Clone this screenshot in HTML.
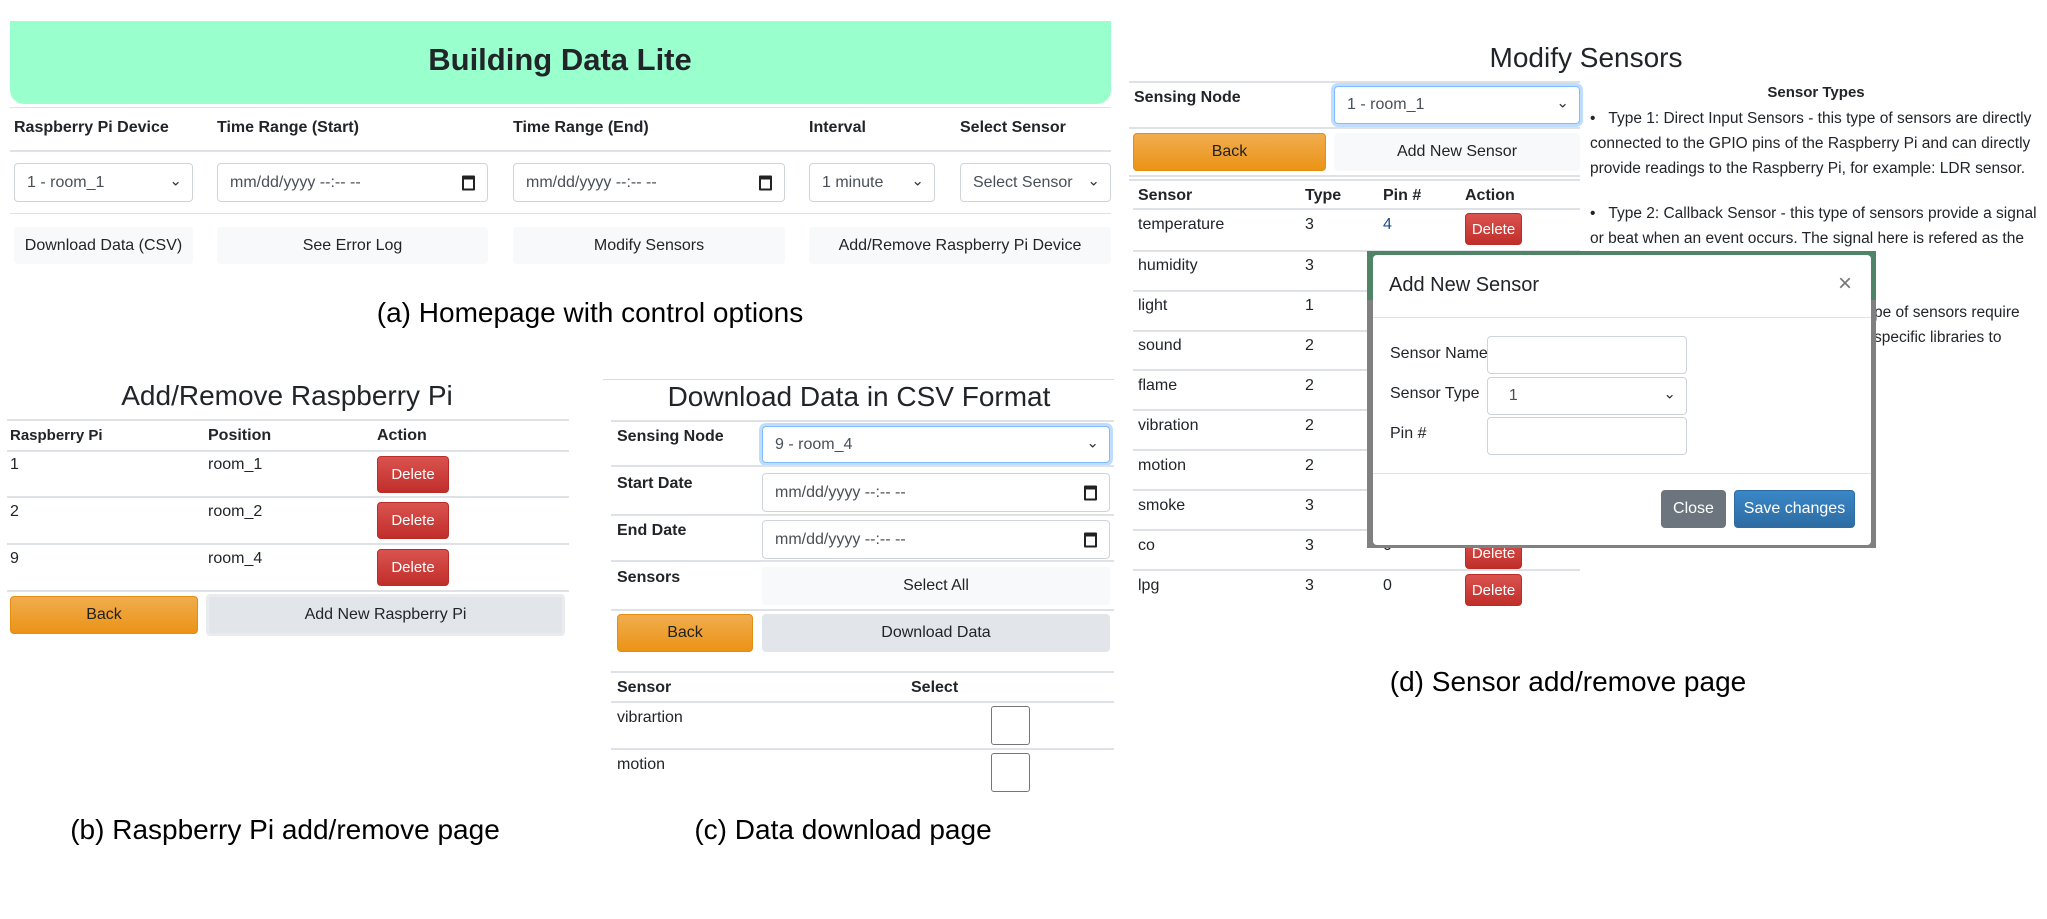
<!DOCTYPE html>
<html><head><meta charset="utf-8"><style>
*{box-sizing:border-box;margin:0;padding:0}
body{width:2047px;height:919px;background:#fff;position:relative;overflow:hidden;font-family:"Liberation Sans",sans-serif;color:#212529;font-size:16px}
.a{position:absolute;white-space:nowrap}
.b{font-weight:bold}
.ln{position:absolute;height:2px;background:#dee2e6}
.inp{position:absolute;border:1px solid #ced4da;border-radius:4px;background:#fff;font-size:16px;color:#495057;padding-left:12px;display:flex;align-items:center}
.sel::after{content:"⌄";position:absolute;right:10px;top:50%;transform:translateY(-65%);font-size:15px;color:#333}
.cal{position:absolute;right:12px;top:50%;transform:translateY(-50%);width:13px;height:15px;border:2px solid #222;border-top-width:4px;border-radius:1px}
.btn{position:absolute;display:flex;align-items:center;justify-content:center;border-radius:4px;font-size:16px;overflow:hidden;white-space:nowrap}
.lt{background:#f8f9fa;color:#212529}
.gr{background:#e2e6ea;color:#212529}
.or{background:linear-gradient(#f0ad4e,#eb9316);color:#222;border:1px solid #e38d13}
.dl{background:linear-gradient(#d9534f,#c12e2a);color:#fff;border:1px solid #b92c28;font-size:15px}
.dd{width:57px;min-width:57px;max-width:57px;flex:none}
.cap{position:absolute;font-size:28px;color:#000;white-space:nowrap;transform:translateX(-50%)}
.h{position:absolute;font-size:28px;white-space:nowrap;transform:translateX(-50%)}
.focus{border:1px solid #80bdff;box-shadow:0 0 0 3px rgba(0,123,255,.25)}
</style></head><body>

<!-- (a) -->
<div class="a" style="left:10px;top:21px;width:1101px;height:83px;background:#99ffcc;border-radius:0 0 14px 14px"></div>
<div class="h b" style="left:560px;top:42px;font-size:31px">Building Data Lite</div>
<div class="ln" style="left:10px;top:107px;width:1101px;height:1px"></div>
<div class="a b" style="left:14px;top:119px;font-size:16px">Raspberry Pi Device</div>
<div class="a b" style="left:217px;top:119px">Time Range (Start)</div>
<div class="a b" style="left:513px;top:119px">Time Range (End)</div>
<div class="a b" style="left:809px;top:119px">Interval</div>
<div class="a b" style="left:960px;top:119px">Select Sensor</div>
<div class="ln" style="left:10px;top:150px;width:1101px"></div>
<div class="inp sel" style="left:14px;top:163px;width:179px;height:39px">1 - room_1</div>
<div class="inp" style="left:217px;top:163px;width:271px;height:39px">mm/dd/yyyy --:-- --<span class="cal"></span></div>
<div class="inp" style="left:513px;top:163px;width:272px;height:39px">mm/dd/yyyy --:-- --<span class="cal"></span></div>
<div class="inp sel" style="left:809px;top:163px;width:126px;height:39px">1 minute</div>
<div class="inp sel" style="left:960px;top:163px;width:151px;height:39px">Select Sensor</div>
<div class="ln" style="left:10px;top:213px;width:1101px;height:1px"></div>
<div class="btn lt" style="left:14px;top:227px;width:179px;height:37px">Download Data (CSV)</div>
<div class="btn lt" style="left:217px;top:227px;width:271px;height:37px">See Error Log</div>
<div class="btn lt" style="left:513px;top:227px;width:272px;height:37px">Modify Sensors</div>
<div class="btn lt" style="left:809px;top:227px;width:302px;height:37px">Add/Remove Raspberry Pi Device</div>
<div class="cap" style="left:590px;top:297px">(a) Homepage with control options</div>

<!-- (b) -->
<div class="h" style="left:287px;top:380px">Add/Remove Raspberry Pi</div>
<div class="ln" style="left:7px;top:419px;width:562px"></div>
<div class="a b" style="left:10px;top:427px;font-size:15px">Raspberry Pi</div>
<div class="a b" style="left:208px;top:427px">Position</div>
<div class="a b" style="left:377px;top:427px">Action</div>
<div class="ln" style="left:7px;top:450px;width:562px"></div>
<div class="a" style="left:10px;top:456px">1</div><div class="a" style="left:208px;top:456px">room_1</div>
<div class="btn dl" style="left:377px;top:456px;width:72px;height:37px">Delete</div>
<div class="ln" style="left:7px;top:496px;width:562px"></div>
<div class="a" style="left:10px;top:503px">2</div><div class="a" style="left:208px;top:503px">room_2</div>
<div class="btn dl" style="left:377px;top:502px;width:72px;height:37px">Delete</div>
<div class="ln" style="left:7px;top:543px;width:562px"></div>
<div class="a" style="left:10px;top:550px">9</div><div class="a" style="left:208px;top:550px">room_4</div>
<div class="btn dl" style="left:377px;top:549px;width:72px;height:37px">Delete</div>
<div class="ln" style="left:7px;top:590px;width:562px"></div>
<div class="btn or" style="left:10px;top:596px;width:188px;height:38px">Back</div>
<div class="btn gr" style="left:206px;top:594px;width:359px;height:42px;border:3px solid #e9ecef">Add New Raspberry Pi</div>
<div class="cap" style="left:285px;top:814px">(b) Raspberry Pi add/remove page</div>

<!-- (c) -->
<div class="a" style="left:603px;top:379px;width:511px;height:1px;background:#99ffcc"></div>
<div class="h" style="left:859px;top:381px">Download Data in CSV Format</div>
<div class="ln" style="left:611px;top:420px;width:503px"></div>
<div class="a b" style="left:617px;top:428px">Sensing Node</div>
<div class="inp sel focus" style="left:762px;top:426px;width:348px;height:37px">9 - room_4</div>
<div class="ln" style="left:611px;top:465px;width:503px"></div>
<div class="a b" style="left:617px;top:475px">Start Date</div>
<div class="inp" style="left:762px;top:473px;width:348px;height:39px">mm/dd/yyyy --:-- --<span class="cal"></span></div>
<div class="ln" style="left:611px;top:514px;width:503px"></div>
<div class="a b" style="left:617px;top:522px">End Date</div>
<div class="inp" style="left:762px;top:520px;width:348px;height:39px">mm/dd/yyyy --:-- --<span class="cal"></span></div>
<div class="ln" style="left:611px;top:560px;width:503px"></div>
<div class="a b" style="left:617px;top:569px">Sensors</div>
<div class="btn lt" style="left:762px;top:567px;width:348px;height:38px">Select All</div>
<div class="ln" style="left:611px;top:609px;width:503px"></div>
<div class="btn or" style="left:617px;top:614px;width:136px;height:38px">Back</div>
<div class="btn gr" style="left:762px;top:614px;width:348px;height:38px">Download Data</div>
<div class="ln" style="left:611px;top:671px;width:503px"></div>
<div class="a b" style="left:617px;top:679px">Sensor</div>
<div class="a b" style="left:911px;top:679px">Select</div>
<div class="ln" style="left:611px;top:701px;width:503px"></div>
<div class="a" style="left:617px;top:709px">vibrartion</div>
<div class="a" style="left:991px;top:706px;width:39px;height:39px;border:1px solid #767676;border-radius:3px"></div>
<div class="ln" style="left:611px;top:748px;width:503px"></div>
<div class="a" style="left:617px;top:756px">motion</div>
<div class="a" style="left:991px;top:753px;width:39px;height:39px;border:1px solid #767676;border-radius:3px"></div>
<div class="cap" style="left:843px;top:814px">(c) Data download page</div>

<!-- (d) -->
<div class="h" style="left:1586px;top:42px">Modify Sensors</div>
<div class="ln" style="left:1129px;top:81px;width:451px"></div>
<div class="a b" style="left:1134px;top:89px">Sensing Node</div>
<div class="inp sel focus" style="left:1334px;top:86px;width:246px;height:38px">1 - room_1</div>
<div class="ln" style="left:1129px;top:127px;width:451px"></div>
<div class="btn or" style="left:1133px;top:133px;width:193px;height:38px">Back</div>
<div class="btn lt" style="left:1334px;top:133px;width:246px;height:38px">Add New Sensor</div>
<div class="ln" style="left:1129px;top:175px;width:451px"></div>
<div class="ln" style="left:1129px;top:179px;width:451px"></div>
<div class="a b" style="left:1138px;top:187px">Sensor</div>
<div class="a b" style="left:1305px;top:187px">Type</div>
<div class="a b" style="left:1383px;top:187px">Pin #</div>
<div class="a b" style="left:1465px;top:187px">Action</div>
<div class="ln" style="left:1133px;top:208px;width:447px"></div>

<div class="a" style="left:1138px;top:216px">temperature</div><div class="a" style="left:1305px;top:216px">3</div><div class="a" style="left:1383px;top:216px;color:#1a4f8a">4</div>
<div class="btn dl dd" style="left:1465px;top:213px;height:32px">Delete</div>
<div class="ln" style="left:1133px;top:250px;width:447px"></div>
<div class="a" style="left:1138px;top:257px">humidity</div><div class="a" style="left:1305px;top:257px">3</div>
<div class="ln" style="left:1133px;top:290px;width:447px"></div>
<div class="a" style="left:1138px;top:297px">light</div><div class="a" style="left:1305px;top:297px">1</div>
<div class="ln" style="left:1133px;top:330px;width:447px"></div>
<div class="a" style="left:1138px;top:337px">sound</div><div class="a" style="left:1305px;top:337px">2</div>
<div class="ln" style="left:1133px;top:369px;width:447px"></div>
<div class="a" style="left:1138px;top:377px">flame</div><div class="a" style="left:1305px;top:377px">2</div>
<div class="ln" style="left:1133px;top:409px;width:447px"></div>
<div class="a" style="left:1138px;top:417px">vibration</div><div class="a" style="left:1305px;top:417px">2</div>
<div class="ln" style="left:1133px;top:449px;width:447px"></div>
<div class="a" style="left:1138px;top:457px">motion</div><div class="a" style="left:1305px;top:457px">2</div>
<div class="ln" style="left:1133px;top:489px;width:447px"></div>
<div class="a" style="left:1138px;top:497px">smoke</div><div class="a" style="left:1305px;top:497px">3</div>
<div class="ln" style="left:1133px;top:529px;width:447px"></div>
<div class="a" style="left:1138px;top:537px">co</div><div class="a" style="left:1305px;top:537px">3</div><div class="a" style="left:1383px;top:537px">0</div>
<div class="btn dl dd" style="left:1465px;top:537px;height:32px">Delete</div>
<div class="ln" style="left:1133px;top:569px;width:447px"></div>
<div class="a" style="left:1138px;top:577px">lpg</div><div class="a" style="left:1305px;top:577px">3</div><div class="a" style="left:1383px;top:577px">0</div>
<div class="btn dl dd" style="left:1465px;top:574px;height:32px">Delete</div>

<div class="a b" style="left:1816px;top:84px;transform:translateX(-50%);font-size:15px">Sensor Types</div>
<div class="a" style="left:1590px;top:106px;font-size:15.5px;line-height:25px;white-space:normal;width:457px">•&nbsp;&nbsp;&nbsp;Type 1: Direct Input Sensors - this type of sensors are directly connected to the GPIO pins of the Raspberry Pi and can directly provide readings to the Raspberry Pi, for example: LDR sensor.</div>
<div class="a" style="left:1590px;top:201px;font-size:15.5px;line-height:25px;white-space:normal;width:457px">•&nbsp;&nbsp;&nbsp;Type 2: Callback Sensor - this type of sensors provide a signal or beat when an event occurs. The signal here is refered as the</div>
<div class="a" style="left:1874px;top:300px;font-size:15.5px;line-height:25px">pe of sensors require<br>specific libraries to</div>

<!-- modal -->
<div class="a" style="left:1367px;top:251px;width:509px;height:297px;background:#808080"></div>
<div class="a" style="left:1367px;top:251px;width:509px;height:49px;background:#4f8467"></div>
<div class="a" style="left:1373px;top:255px;width:498px;height:290px;background:#fff;border-radius:4px"></div>
<div class="a" style="left:1389px;top:274px;font-size:20px;font-weight:500">Add New Sensor</div>
<div class="a" style="left:1838px;top:270px;font-size:24px;color:#777">×</div>
<div class="a" style="left:1373px;top:317px;width:498px;height:1px;background:#dee2e6"></div>
<div class="a" style="left:1390px;top:345px">Sensor Name</div>
<div class="inp" style="left:1487px;top:336px;width:200px;height:38px"></div>
<div class="a" style="left:1390px;top:385px">Sensor Type</div>
<div class="inp sel" style="left:1487px;top:377px;width:200px;height:38px">&nbsp;&nbsp;1</div>
<div class="a" style="left:1390px;top:425px">Pin #</div>
<div class="inp" style="left:1487px;top:417px;width:200px;height:38px"></div>
<div class="a" style="left:1373px;top:473px;width:498px;height:1px;background:#dee2e6"></div>
<div class="btn" style="left:1661px;top:490px;width:65px;height:38px;background:#6c757d;color:#fff">Close</div>
<div class="btn" style="left:1734px;top:490px;width:121px;height:38px;background:linear-gradient(#3a87c8,#2d6ca2);color:#fff;border:1px solid #2e6da4">Save changes</div>

<div class="cap" style="left:1568px;top:666px">(d) Sensor add/remove page</div>
</body></html>
